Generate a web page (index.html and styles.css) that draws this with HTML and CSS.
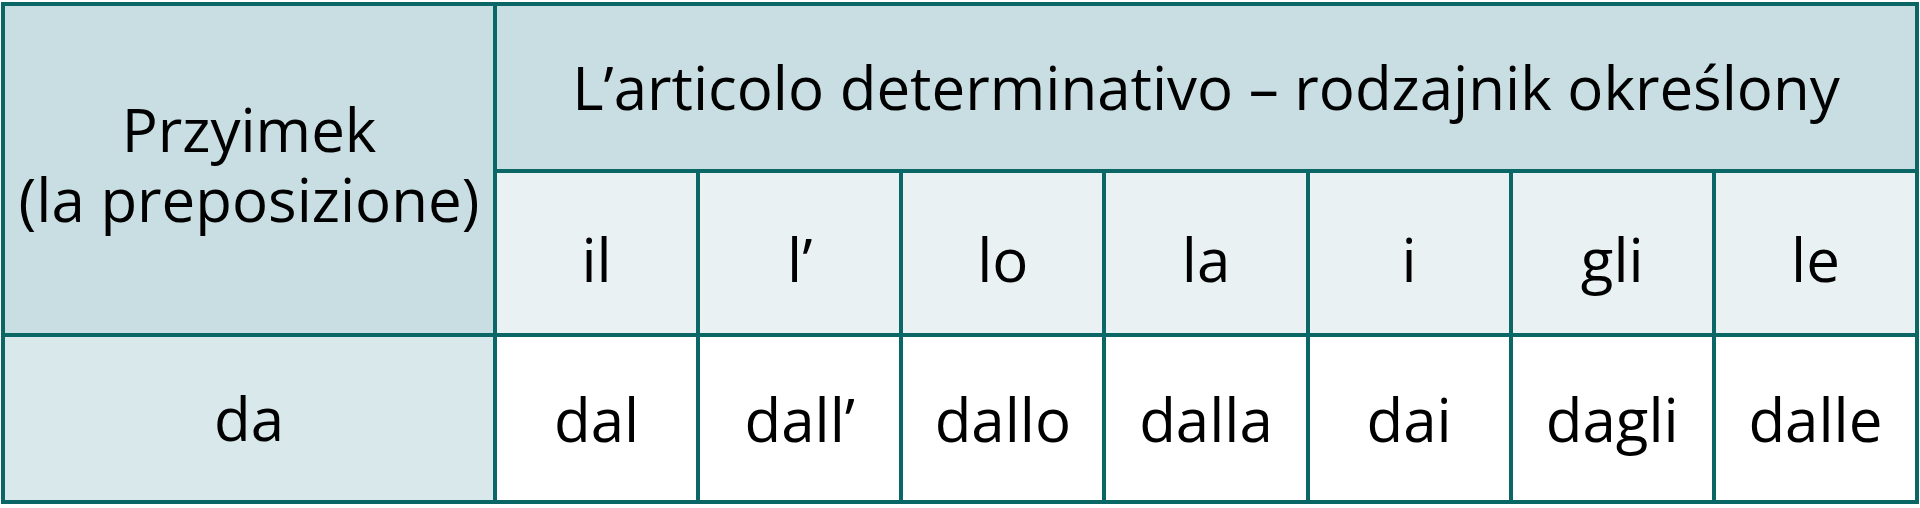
FILE: index.html
```html
<!DOCTYPE html>
<html lang="pl">
<head>
<meta charset="utf-8">
<link rel="stylesheet" href="styles.css">
</head>
<body>
<div class="table">
  <div class="cell head prep"><span class="line">Przyimek</span><span class="line">(la preposizione)</span></div>
  <div class="cell head title">L’articolo determinativo – rodzajnik określony</div>
  <div class="cell sub">il</div>
  <div class="cell sub">l’</div>
  <div class="cell sub">lo</div>
  <div class="cell sub">la</div>
  <div class="cell sub">i</div>
  <div class="cell sub">gli</div>
  <div class="cell sub">le</div>
  <div class="cell first">da</div>
  <div class="cell data">dal</div>
  <div class="cell data">dall’</div>
  <div class="cell data">dallo</div>
  <div class="cell data">dalla</div>
  <div class="cell data">dai</div>
  <div class="cell data">dagli</div>
  <div class="cell data">dalle</div>
</div>
</body>
</html>
```
FILE: styles.css
```css
html, body {
  margin: 0;
  padding: 0;
  background: #ffffff;
}
body {
  font-family: "Open Sans", "Noto Sans", sans-serif;
  color: #000000;
}
.table {
  margin: 2px 0 0 1px;
  width: 1918px;
  height: 502px;
  box-sizing: border-box;
  padding: 4px;
  gap: 4px;
  background: #0b6766;
  display: grid;
  grid-template-columns: 488px repeat(7, 1fr);
  grid-template-rows: 163px 160px 163px;
}
.cell {
  display: flex;
  align-items: center;
  justify-content: center;
  text-align: center;
  font-size: 60px;
  line-height: 1.15;
  box-sizing: border-box;
}
.head {
  background: #c8dee2;
}
.prep {
  grid-row: 1 / 3;
  grid-column: 1;
  flex-direction: column;
  line-height: 70px;
  padding-bottom: 12px;
}
.line {
  display: block;
}
.title {
  grid-column: 2 / 9;
}
.sub {
  background: #e9f1f3;
  padding-top: 13px;
}
.first {
  background: #d8e8eb;
}
.data {
  background: #ffffff;
  padding-top: 2px;
}
```
